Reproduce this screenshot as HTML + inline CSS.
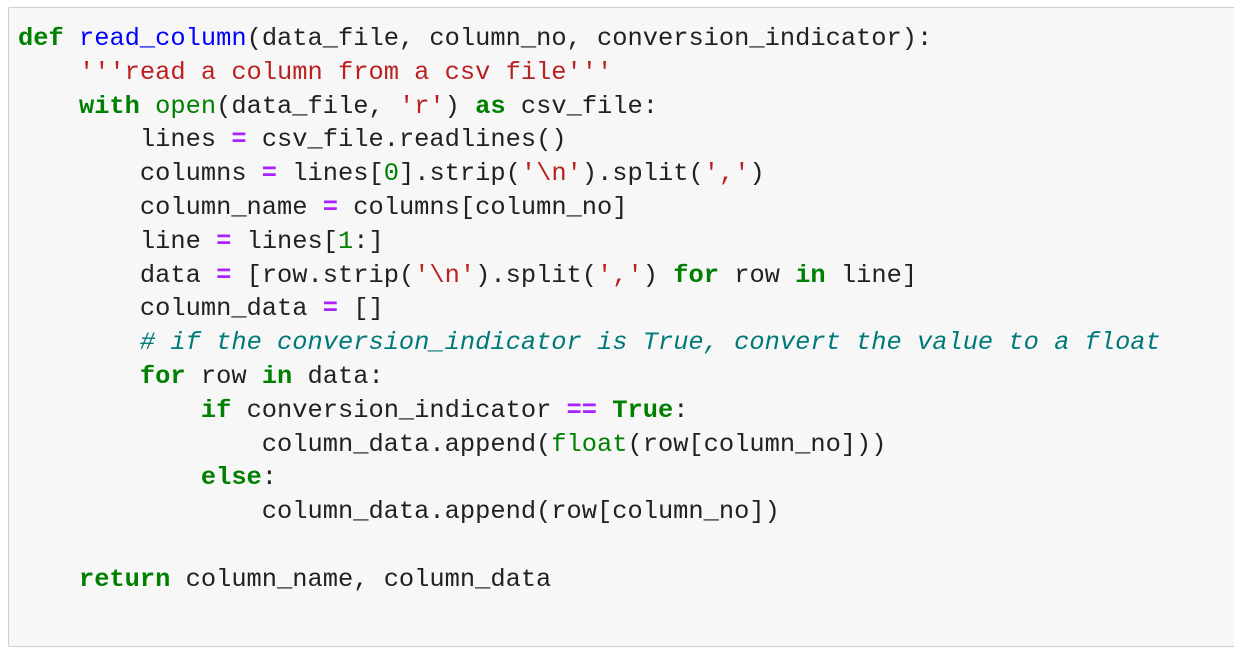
<!DOCTYPE html>
<html><head><style>
html,body{margin:0;padding:0;background:#fff;width:1234px;height:628px;overflow:hidden}
.box{position:absolute;left:8px;top:7px;width:1240px;height:640px;background:#f7f7f7;border:1px solid #cfcfcf;border-radius:2px;box-sizing:border-box}
pre{position:absolute;left:18px;top:22px;margin:0;font-family:"Liberation Mono",monospace;font-size:25.4px;line-height:33.8px;color:#212121;white-space:pre}
.k{color:#008000;font-weight:bold}
.f{color:#0000ff}
.b{color:#008000}
.s{color:#ba2121}
.o{color:#aa22ff;font-weight:bold}
.n{color:#008000}
.c{color:#007979;font-style:italic}
</style></head><body>
<div class="box"></div>
<pre><span class="k">def</span> <span class="f">read_column</span>(data_file, column_no, conversion_indicator):
    <span class="s">'''read a column from a csv file'''</span>
    <span class="k">with</span> <span class="b">open</span>(data_file, <span class="s">'r'</span>) <span class="k">as</span> csv_file:
        lines <span class="o">=</span> csv_file.readlines()
        columns <span class="o">=</span> lines[<span class="n">0</span>].strip(<span class="s">'\n'</span>).split(<span class="s">','</span>)
        column_name <span class="o">=</span> columns[column_no]
        line <span class="o">=</span> lines[<span class="n">1</span>:]
        data <span class="o">=</span> [row.strip(<span class="s">'\n'</span>).split(<span class="s">','</span>) <span class="k">for</span> row <span class="k">in</span> line]
        column_data <span class="o">=</span> []
        <span class="c"># if the conversion_indicator is True, convert the value to a float</span>
        <span class="k">for</span> row <span class="k">in</span> data:
            <span class="k">if</span> conversion_indicator <span class="o">==</span> <span class="k">True</span>:
                column_data.append(<span class="b">float</span>(row[column_no]))
            <span class="k">else</span>:
                column_data.append(row[column_no])

    <span class="k">return</span> column_name, column_data
</pre>
</body></html>
